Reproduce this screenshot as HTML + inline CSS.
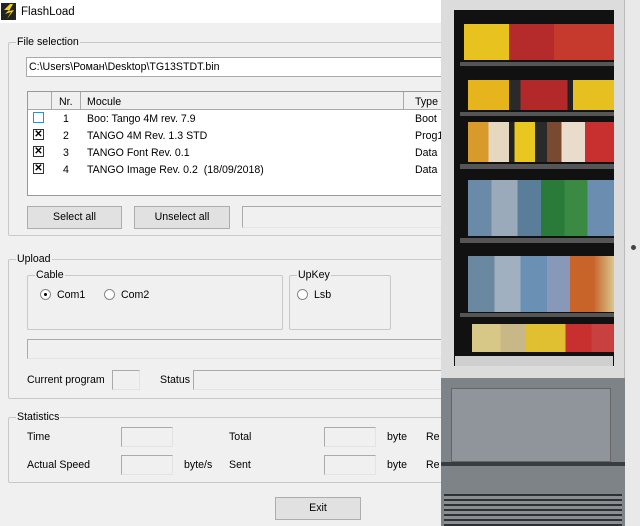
<!DOCTYPE html>
<html><head><meta charset="utf-8"><style>
*{margin:0;padding:0;box-sizing:border-box}
body{width:640px;height:526px;background:#f0f0f0;position:relative;overflow:hidden;font-family:"Liberation Sans",sans-serif;font-size:10.6px;color:#000}
.a{position:absolute}
.t{position:absolute;white-space:nowrap;line-height:14px}
.grp{position:absolute;border:1px solid #c8c8c8;border-radius:2px}
.lab{position:absolute;background:#f0f0f0;padding:0 1px;line-height:14px;white-space:nowrap}
.box{position:absolute;border:1px solid #aaa;border-right-color:#e3e3e3;border-bottom-color:#e3e3e3;background:#f0f0f0}
.btn{position:absolute;border:1px solid #adadad;background:#e1e1e1;text-align:center;line-height:20px}
.cb{position:absolute;width:11px;height:11px;border:1px solid #333;background:#fff;font-size:10px;line-height:9px;text-align:center;font-weight:bold}
.rd{position:absolute;width:11px;height:11px;border-radius:50%;border:1px solid #888;background:#fff}
</style></head><body>
<div class="a" style="left:0;top:0;width:640px;height:23px;background:#fff"></div>
<svg class="a" style="left:1px;top:3px" width="15" height="17"><rect width="15" height="17" fill="#222"/><path d="M9 1 L3 7 L8 7 L4 11 L10 9 L6 16 L13 7 L8 8 L12 1Z" fill="#f3d21a"/></svg>
<div class="t" style="left:21px;top:5px;font-size:11.5px">FlashLoad</div>

<div class="grp" style="left:8px;top:42px;width:440px;height:194px"></div>
<div class="lab" style="left:16px;top:35px">File selection</div>
<div class="a" style="left:26px;top:57px;width:420px;height:20px;background:#fff;border:1px solid #aaa"></div>
<div class="t" style="left:29px;top:60px">C:\Users\Роман\Desktop\TG13STDT.bin</div>

<div class="a" style="left:27px;top:91px;width:420px;height:105px;background:#fff;border:1px solid #999"></div>
<div class="a" style="left:28px;top:92px;width:420px;height:18px;background:#f0f0f0;border-bottom:1px solid #aaa"></div>
<div class="a" style="left:51px;top:92px;width:1px;height:18px;background:#aaa"></div>
<div class="a" style="left:80px;top:92px;width:1px;height:18px;background:#aaa"></div>
<div class="a" style="left:403px;top:92px;width:1px;height:18px;background:#aaa"></div>
<div class="t" style="left:59px;top:95px">Nr.</div>
<div class="t" style="left:87px;top:95px">Mocule</div>
<div class="t" style="left:415px;top:95px">Type</div>
<div class="cb" style="left:33px;top:112px;border-color:#3a8fb0"></div>
<div class="cb" style="left:33px;top:129px">✕</div>
<div class="cb" style="left:33px;top:146px">✕</div>
<div class="cb" style="left:33px;top:163px">✕</div>
<div class="t" style="left:63px;top:112px">1</div><div class="t" style="left:87px;top:112px">Boo: Tango 4M rev. 7.9</div><div class="t" style="left:415px;top:112px">Boot</div>
<div class="t" style="left:63px;top:129px">2</div><div class="t" style="left:87px;top:129px">TANGO 4M Rev. 1.3 STD</div><div class="t" style="left:415px;top:129px">Prog1</div>
<div class="t" style="left:63px;top:146px">3</div><div class="t" style="left:87px;top:146px">TANGO Font Rev. 0.1</div><div class="t" style="left:415px;top:146px">Data</div>
<div class="t" style="left:63px;top:163px">4</div><div class="t" style="left:87px;top:163px">TANGO Image Rev. 0.2 &nbsp;(18/09/2018)</div><div class="t" style="left:415px;top:163px">Data</div>

<div class="btn" style="left:27px;top:206px;width:95px;height:23px">Select all</div>
<div class="btn" style="left:134px;top:206px;width:96px;height:23px">Unselect all</div>
<div class="box" style="left:242px;top:206px;width:210px;height:22px"></div>

<div class="grp" style="left:8px;top:259px;width:440px;height:140px"></div>
<div class="lab" style="left:16px;top:252px">Upload</div>
<div class="grp" style="left:27px;top:275px;width:256px;height:55px"></div>
<div class="lab" style="left:35px;top:268px">Cable</div>
<div class="rd" style="left:40px;top:289px"><div class="a" style="left:3px;top:3px;width:3px;height:3px;border-radius:50%;background:#000"></div></div>
<div class="t" style="left:57px;top:288px">Com1</div>
<div class="rd" style="left:104px;top:289px"></div>
<div class="t" style="left:121px;top:288px">Com2</div>
<div class="grp" style="left:289px;top:275px;width:102px;height:55px"></div>
<div class="lab" style="left:297px;top:268px">UpKey</div>
<div class="rd" style="left:297px;top:289px"></div>
<div class="t" style="left:314px;top:288px">Lsb</div>
<div class="box" style="left:27px;top:339px;width:420px;height:20px"></div>
<div class="t" style="left:27px;top:373px">Current program</div>
<div class="box" style="left:112px;top:370px;width:28px;height:20px"></div>
<div class="t" style="left:160px;top:373px">Status</div>
<div class="box" style="left:193px;top:370px;width:255px;height:20px"></div>

<div class="grp" style="left:8px;top:417px;width:440px;height:66px"></div>
<div class="lab" style="left:16px;top:410px">Statistics</div>
<div class="t" style="left:27px;top:430px">Time</div>
<div class="box" style="left:121px;top:427px;width:52px;height:20px"></div>
<div class="t" style="left:229px;top:430px">Total</div>
<div class="box" style="left:324px;top:427px;width:52px;height:20px"></div>
<div class="t" style="left:387px;top:430px">byte</div><div class="t" style="left:426px;top:430px">Re</div>
<div class="t" style="left:27px;top:458px">Actual Speed</div>
<div class="box" style="left:121px;top:455px;width:52px;height:20px"></div>
<div class="t" style="left:184px;top:458px">byte/s</div>
<div class="t" style="left:229px;top:458px">Sent</div>
<div class="box" style="left:324px;top:455px;width:52px;height:20px"></div>
<div class="t" style="left:387px;top:458px">byte</div><div class="t" style="left:426px;top:458px">Re</div>
<div class="btn" style="left:275px;top:497px;width:86px;height:23px">Exit</div>

<!-- vending machine -->
<div class="a" style="left:625px;top:0;width:15px;height:526px;background:#e9e9e9"></div>
<div class="a" style="left:441px;top:0;width:184px;height:380px;background:#dcdcdc;border-right:1px solid #bbb"></div>
<div class="a" style="left:454px;top:10px;width:160px;height:356px;background:#111"></div>
<div class="a" style="left:455px;top:356px;width:158px;height:10px;background:#cfcfcf"></div>
<div class="a" style="left:464px;top:24px;width:150px;height:36px;background:linear-gradient(90deg,#e8c21e 0 30%,#b52a2a 30% 60%,#c63a2e 60% 100%)"></div>
<div class="a" style="left:460px;top:62px;width:154px;height:4px;background:#555"></div>
<div class="a" style="left:468px;top:80px;width:146px;height:30px;background:linear-gradient(90deg,#e6b41c 0 28%,#2a2a2a 28% 36%,#b3292a 36% 68%,#222 68% 72%,#e6c020 72%)"></div>
<div class="a" style="left:460px;top:112px;width:154px;height:4px;background:#555"></div>
<div class="a" style="left:468px;top:122px;width:146px;height:40px;background:linear-gradient(90deg,#d89a2a 0 14%,#e6d8c0 14% 28%,#222 28% 32%,#e8c820 32% 46%,#2a2a2a 46% 54%,#7a4a30 54% 64%,#e9dccc 64% 80%,#c83030 80%)"></div>
<div class="a" style="left:460px;top:164px;width:154px;height:5px;background:#555"></div>
<div class="a" style="left:468px;top:180px;width:146px;height:56px;background:linear-gradient(90deg,#6a8aa8 0 16%,#9aaabb 16% 34%,#5a7d9a 34% 50%,#2a7a3a 50% 66%,#3a8a44 66% 82%,#6a8db0 82%)"></div>
<div class="a" style="left:460px;top:238px;width:154px;height:5px;background:#555"></div>
<div class="a" style="left:468px;top:256px;width:146px;height:56px;background:linear-gradient(90deg,#6a88a0 0 18%,#a0b0c0 18% 36%,#6a90b4 36% 54%,#8898b8 54% 70%,#c8642a 70% 86%,#d8c890)"></div>
<div class="a" style="left:460px;top:313px;width:154px;height:4px;background:#555"></div>
<div class="a" style="left:472px;top:324px;width:142px;height:28px;background:linear-gradient(90deg,#d8c888 0 20%,#c8b888 20% 38%,#e0c030 38% 52%,#e0c030 52% 66%,#c83030 66% 84%,#c84040 84%)"></div>
<div class="a" style="left:441px;top:378px;width:184px;height:148px;background:#7e8388"></div>
<div class="a" style="left:451px;top:388px;width:160px;height:74px;background:#8f959b;border:1px solid #666"></div>
<div class="a" style="left:441px;top:462px;width:184px;height:4px;background:#3a3d40"></div>
<div class="a" style="left:444px;top:494px;width:178px;height:32px;background:repeating-linear-gradient(#2e3134 0 2px,#8a8e92 2px 5px)"></div>
<div class="a" style="left:631px;top:245px;width:5px;height:5px;border-radius:50%;background:#444"></div>
</body></html>
